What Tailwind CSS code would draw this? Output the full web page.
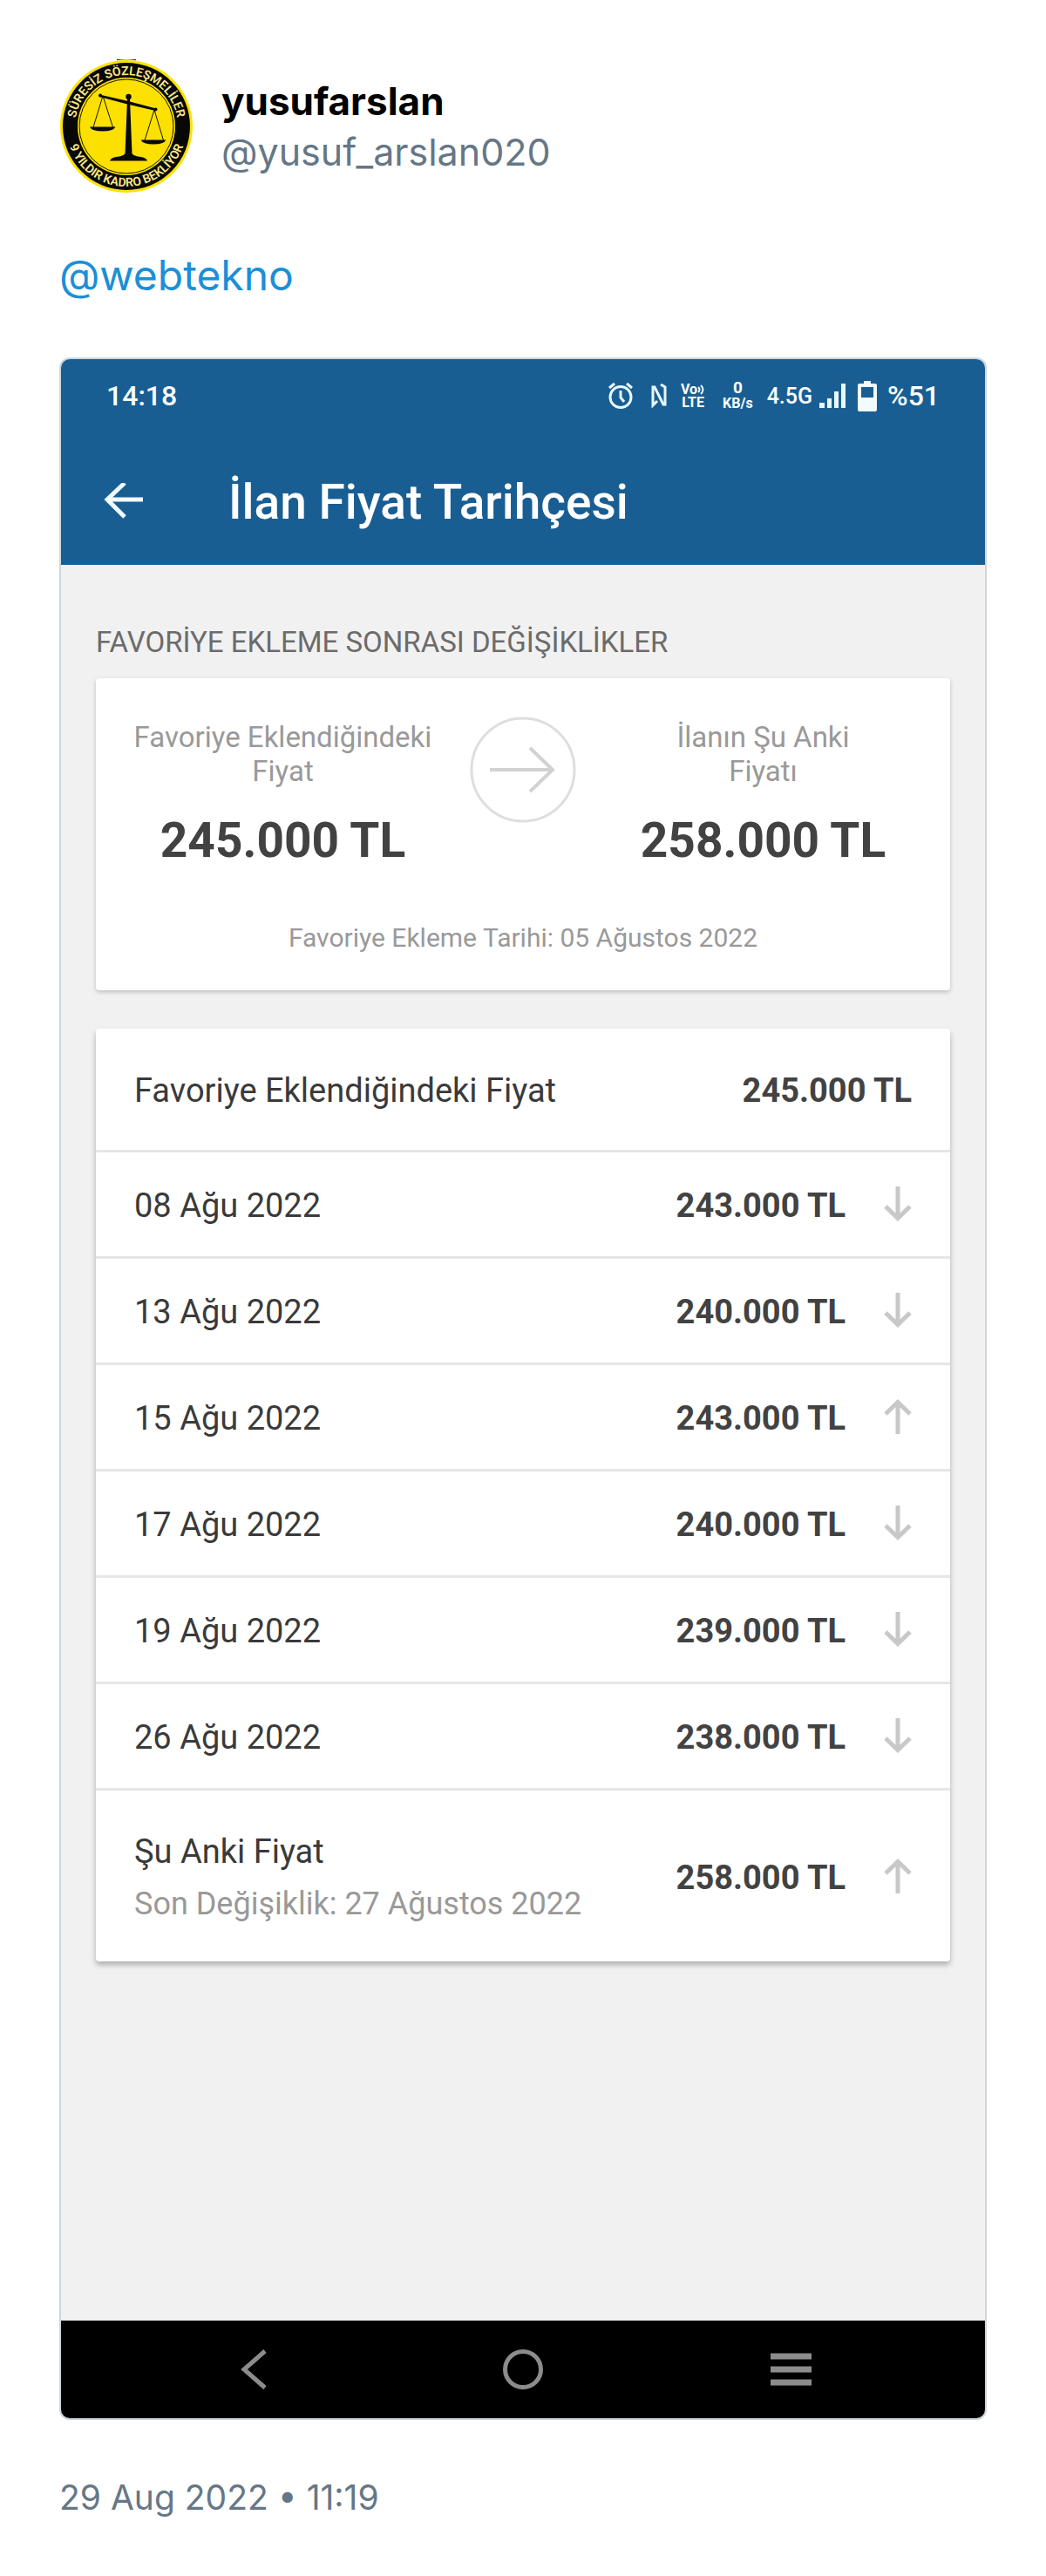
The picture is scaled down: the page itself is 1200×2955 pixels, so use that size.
<!DOCTYPE html>
<html lang="tr">
  <head>
    <meta charset="UTF-8" />
    <meta name="viewport" content="width=device-width, initial-scale=1.0" />
    <title>yusufarslan - @webtekno</title>
    <script src="https://cdn.jsdelivr.net/npm/@tailwindcss/browser@4"></script>
  </head>
  <body class="bg-white font-['Inter','Liberation_Sans',sans-serif]">
    <!-- arrows shared by the price rows -->
    <svg class="hidden">
      <symbol id="arrow-down" viewBox="0 0 32 40">
        <path d="M16 0v36M2 23l14 13.500L30 23" fill="none" stroke="#c8c8c8" stroke-width="5" />
      </symbol>
      <symbol id="arrow-up" viewBox="0 0 32 40">
        <path d="M16 40V4M2 17L16 3.500L30 17" fill="none" stroke="#c8c8c8" stroke-width="5" />
      </symbol>
    </svg>

    <article class="px-17 pt-17 pb-12">
      <header class="flex items-center gap-8">
        <svg class="size-[154px] shrink-0" viewBox="-77 -77 154 154" role="img" aria-label="yusufarslan">
          <defs>
            <path id="ring-top" d="M-59 0A59 59 0 0 1 59 0" />
            <path id="ring-bottom" d="M-69 0A69 69 0 0 0 69 0" />
          </defs>
          <path d="M-11 -76.500Q0 -78.500 11 -76.500" stroke="#33300a" stroke-width="1.500" fill="none" />
          <circle r="76" fill="#fbe200" />
          <circle r="73" fill="#080808" />
          <circle r="56" fill="#fbe000" />
          <circle r="54" fill="none" stroke="#151300" stroke-width="1" />
          <g fill="#fbe98a" font-family="Roboto, sans-serif" font-size="14" font-weight="600" text-anchor="middle">
            <text><textPath href="#ring-top" startOffset="50%">SÜRESİZ SÖZLEŞMELİLER</textPath></text>
            <text><textPath href="#ring-bottom" startOffset="50%">9 YILDIR KADRO BEKLİYOR</textPath></text>
          </g>
          <g fill="#080808">
            <circle cx="2.500" cy="-34" r="3.200" />
            <path d="M1 -31H4L6.500 31Q8 34 17 35Q23 36 24 39.500H-19Q-18 36 -12 35Q-3 34 -1.500 31Z" />
            <path d="M-31 -36.500L2 -29L34 -20.500L33 -18L1 -25.500L-31 -34Z" />
            <circle cx="-30" cy="-35.500" r="2" />
            <circle cx="33.500" cy="-19.500" r="2" />
            <path d="M-42 .5H-12.500Q-15 5.500 -27 5.500Q-40 5.500 -42 .5Z" />
            <path d="M16.500 15.500H45.500Q43 20.500 31 20.500Q19 20.500 16.500 15.500Z" />
            <path d="M-27 -35L-38 1M-27 -35L-15.500 1M32 -19L21 16M32 -19L42.500 16" stroke="#151300" stroke-width="1" fill="none" />
          </g>
        </svg>
        <div class="leading-[58px]">
          <h1 class="text-[44px] font-bold text-black">yusufarslan</h1>
          <p class="text-[43px] text-[#657786]">@yusuf_arslan020</p>
        </div>
      </header>

      <p class="mt-16 text-[48px] leading-[60px]">
        <a href="#" class="text-[#1b8fd8]">@webtekno</a>
      </p>

      <section
        class="mt-16 overflow-hidden rounded-xl border-2 border-[#ccd6dd] bg-[#f1f1f1] font-['Roboto','Liberation_Sans',sans-serif]"
      >
        <div class="bg-[#195e93] text-white">
          <div class="flex items-center justify-between pt-6 pr-13 pl-13">
            <time class="text-[32px] leading-9 font-medium">14:18</time>
            <div class="flex items-center leading-none font-medium">
              <svg class="mr-5 h-8 w-[30px]" viewBox="0 0 30 32" fill="none" stroke="#e8f7ff" stroke-width="3">
                <circle cx="15" cy="17.500" r="12" />
                <path d="M15 10v8l4 5M2 7l6-5M28 7l-6-5" />
              </svg>
              <svg class="mr-4 h-7 w-[18px]" viewBox="0 0 18 28" fill="none" stroke="#e8f7ff" stroke-width="3">
                <path d="M7 20L2 25V4H4L14 24H16V4L11 1" />
              </svg>
              <div class="mr-5 text-center text-[16px] leading-[15px] font-bold">
                <div class="flex items-center">
                  Vo
                  <svg class="h-3 w-[9px]" viewBox="0 0 9 12" fill="none" stroke="#e8f7ff" stroke-width="2">
                    <path d="M1 3q3 3 0 6M4 1q5 5 0 10" />
                  </svg>
                </div>
                <div>LTE</div>
              </div>
              <div class="mr-4 text-center text-[16px] leading-[18px] font-bold">
                <div class="text-[19px]">0</div>
                <div>KB/s</div>
              </div>
              <span class="mr-2 text-[25px]">4.5G</span>
              <svg class="mr-3 h-7 w-8" viewBox="0 0 32 28" fill="#e8f7ff">
                <path d="M0 22h6v6H0zM9 17h5v11H9zM17 9h5v19h-5zM25 0h5v28h-5z" />
              </svg>
              <svg class="mr-3 h-[35px] w-[22px]" viewBox="0 0 22 35" fill="#f2fbff" fill-rule="evenodd">
                <path d="M7 0h8v3h5q2 0 2 2v28q0 2-2 2H2q-2 0-2-2V5q0-2 2-2h5zM4 7v12h14V7z" />
              </svg>
              <span class="text-[32px]">%51</span>
            </div>
          </div>
          <div class="flex items-center gap-24 px-12 pt-17 pb-9">
            <button type="button" aria-label="Geri" class="shrink-0">
              <svg class="h-11 w-12" viewBox="0 0 48 44" fill="none" stroke="#f2fbff" stroke-width="5">
                <path d="M25 0L5 19l20 20M5 19h41" />
              </svg>
            </button>
            <h2 class="text-[55px] leading-[72px] font-medium">İlan Fiyat Tarihçesi</h2>
          </div>
        </div>

        <div class="px-10 pt-17 pb-103">
          <h3 class="text-[33px] leading-[42px] text-[#6b6b6b]">FAVORİYE EKLEME SONRASI DEĞİŞİKLİKLER</h3>

          <div class="mt-5 rounded bg-white pt-11 pb-10 shadow-[0_2px_5px_rgba(0,0,0,0.22)]">
            <div class="flex text-center">
              <div class="flex-1 px-8 pt-1">
                <p class="text-[33px] leading-[39px] text-[#999]">Favoriye Eklendiğindeki<br />Fiyat</p>
                <p class="mt-6 text-[55px] leading-[72px] font-bold text-[#424242]">245.000 TL</p>
              </div>
              <svg class="size-[122px] shrink-0" viewBox="0 0 122 122" fill="none">
                <circle cx="61" cy="61" r="59" stroke="#dedede" stroke-width="3" />
                <path d="M23 61h73M69 36l26 25l-26 25" stroke="#d2d2d2" stroke-width="4" />
              </svg>
              <div class="flex-1 px-8 pt-1">
                <p class="text-[33px] leading-[39px] text-[#999]">İlanın Şu Anki<br />Fiyatı</p>
                <p class="mt-6 text-[55px] leading-[72px] font-bold text-[#424242]">258.000 TL</p>
              </div>
            </div>
            <p class="mt-14 text-center text-[30px] leading-10 text-[#999]">Favoriye Ekleme Tarihi: 05 Ağustos 2022</p>
          </div>

          <div class="mt-11 rounded bg-white shadow-[0_4px_6px_rgba(0,0,0,0.28)]">
            <table class="w-full border-collapse text-[38px] leading-12 text-[#3a3a3a]">
              <tbody class="divide-y-3 divide-[#e6e6e6]">
                <tr class="h-[140px]">
                  <th scope="row" class="pt-1 pl-11 text-left font-normal">Favoriye Eklendiğindeki Fiyat</th>
                  <td colspan="2" class="pt-1 pr-11 text-right font-bold text-[#424242]">245.000 TL</td>
                </tr>
                <tr class="h-[122px]">
                  <th scope="row" class="pt-1 pl-11 text-left font-normal">08 Ağu 2022</th>
                  <td class="pt-1 text-right font-bold text-[#424242]">243.000 TL</td>
                  <td class="w-30 pr-11"><svg class="ml-auto h-10 w-8"><use href="#arrow-down" /></svg></td>
                </tr>
                <tr class="h-[122px]">
                  <th scope="row" class="pt-1 pl-11 text-left font-normal">13 Ağu 2022</th>
                  <td class="pt-1 text-right font-bold text-[#424242]">240.000 TL</td>
                  <td class="w-30 pr-11"><svg class="ml-auto h-10 w-8"><use href="#arrow-down" /></svg></td>
                </tr>
                <tr class="h-[122px]">
                  <th scope="row" class="pt-1 pl-11 text-left font-normal">15 Ağu 2022</th>
                  <td class="pt-1 text-right font-bold text-[#424242]">243.000 TL</td>
                  <td class="w-30 pr-11"><svg class="ml-auto h-10 w-8"><use href="#arrow-up" /></svg></td>
                </tr>
                <tr class="h-[122px]">
                  <th scope="row" class="pt-1 pl-11 text-left font-normal">17 Ağu 2022</th>
                  <td class="pt-1 text-right font-bold text-[#424242]">240.000 TL</td>
                  <td class="w-30 pr-11"><svg class="ml-auto h-10 w-8"><use href="#arrow-down" /></svg></td>
                </tr>
                <tr class="h-[122px]">
                  <th scope="row" class="pt-1 pl-11 text-left font-normal">19 Ağu 2022</th>
                  <td class="pt-1 text-right font-bold text-[#424242]">239.000 TL</td>
                  <td class="w-30 pr-11"><svg class="ml-auto h-10 w-8"><use href="#arrow-down" /></svg></td>
                </tr>
                <tr class="h-[122px]">
                  <th scope="row" class="pt-1 pl-11 text-left font-normal">26 Ağu 2022</th>
                  <td class="pt-1 text-right font-bold text-[#424242]">238.000 TL</td>
                  <td class="w-30 pr-11"><svg class="ml-auto h-10 w-8"><use href="#arrow-down" /></svg></td>
                </tr>
                <tr class="h-[198px]">
                  <th scope="row" class="pt-1 pl-11 text-left font-normal">
                    Şu Anki Fiyat
                    <span class="mt-3 block text-[36px] text-[#999]">Son Değişiklik: 27 Ağustos 2022</span>
                  </th>
                  <td class="pt-1 text-right font-bold text-[#424242]">258.000 TL</td>
                  <td class="w-30 pr-11"><svg class="ml-auto h-10 w-8"><use href="#arrow-up" /></svg></td>
                </tr>
              </tbody>
            </table>
          </div>
        </div>

        <nav class="flex h-28 items-center justify-around bg-black px-17">
          <button type="button" aria-label="Geri">
            <svg class="size-12" viewBox="0 0 48 48" fill="none" stroke="#8c8c8c" stroke-width="5">
              <path d="M36 3L12 24l24 21" />
            </svg>
          </button>
          <button type="button" aria-label="Ana ekran">
            <svg class="size-12" viewBox="0 0 48 48" fill="none" stroke="#8c8c8c" stroke-width="5">
              <circle cx="24" cy="24" r="20.500" />
            </svg>
          </button>
          <button type="button" aria-label="Son uygulamalar">
            <svg class="size-12" viewBox="0 0 48 48" fill="none" stroke="#8c8c8c" stroke-width="7">
              <path d="M0 9h47M0 24h47M0 39h47" />
            </svg>
          </button>
        </nav>
      </section>

      <footer class="mt-16 text-[39px] leading-[50px] text-[#657786]">
        <time datetime="2022-08-29T11:19">29 Aug 2022 • 11:19</time>
      </footer>
    </article>
  </body>
</html>
